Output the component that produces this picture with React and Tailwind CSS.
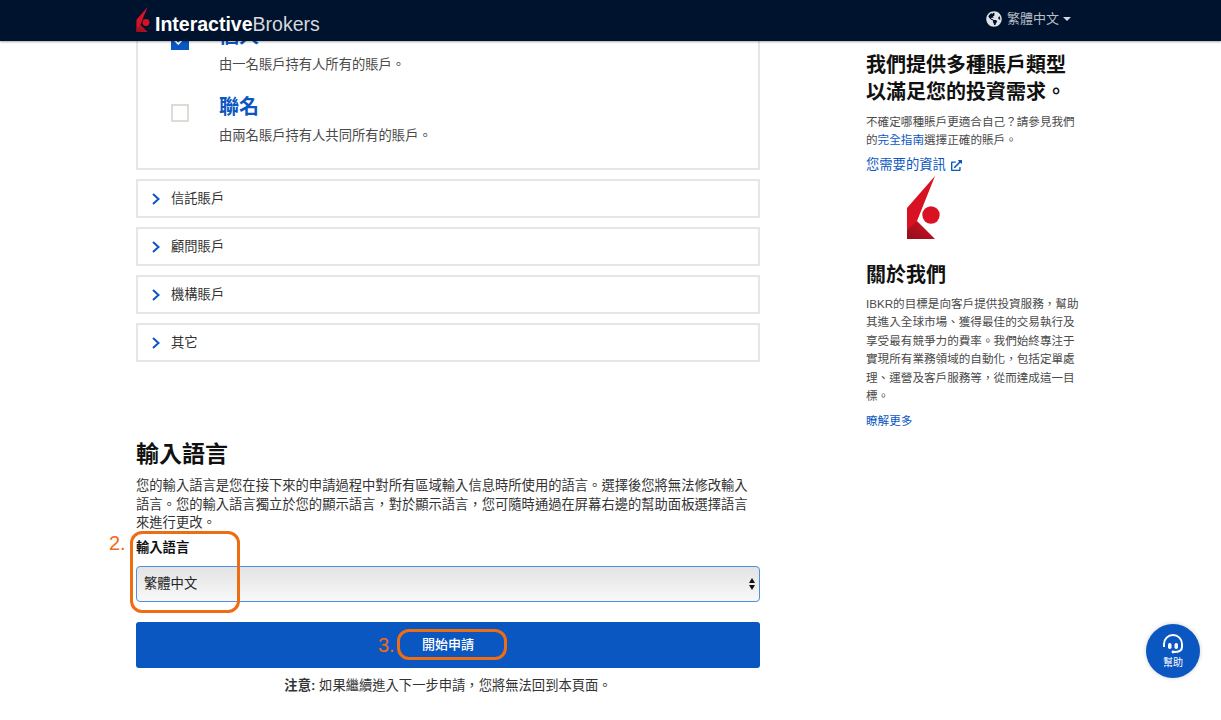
import { Check } from "lucide-react";
import { FaGlobeAmericas, FaExternalLinkAlt } from "react-icons/fa";

const ACCOUNT_GROUPS = ["信託賬戶", "顧問賬戶", "機構賬戶", "其它"];

function IbLogo({ className }) {
  return (
    <svg viewBox="0 0 33 63" className={className}>
      <defs>
        <linearGradient id="ibFold" x1="0" y1="1" x2="1" y2="0">
          <stop offset="0" stopColor="#8f0f1c" />
          <stop offset="1" stopColor="#d81222" />
        </linearGradient>
      </defs>
      <polygon points="28,0 0,32 0,63 10,45" fill="#d81222" />
      <polygon points="0,63 28,63 10,45 0,54" fill="url(#ibFold)" />
      <circle cx="24" cy="39" r="8.7" fill="#d81222" />
    </svg>
  );
}

function Header() {
  return (
    <header className="absolute top-0 left-0 z-20 flex h-[41px] w-full items-center justify-between bg-[#00132e] pl-[136px] pr-[150px] shadow-[0_1px_2px_rgba(0,0,0,0.35)]">
      <div className="flex items-end">
        <IbLogo className="mb-[3px] h-[25px] w-[14px]" />
        <span className="ml-[5px] text-[19.5px] leading-[22px] text-white">
          <span className="font-bold">Interactive</span>
          <span className="text-[#d5d8dd]">Brokers</span>
        </span>
      </div>
      <div className="mb-[4px] flex items-center text-[13px] text-[#b8bdc6]">
        <FaGlobeAmericas className="mr-[5px] text-[16px] text-[#dfe2e6]" />
        繁體中文
        <span className="ml-[4px] h-0 w-0 border-x-[4px] border-t-[4px] border-x-transparent border-t-[#d5d8dd]" />
      </div>
    </header>
  );
}

function AccountRow({ title, desc, checked }) {
  return (
    <div className="flex">
      <div
        className={
          checked
            ? "mt-[10px] flex h-[18px] w-[18px] items-center justify-center bg-[#0b57c2] text-white"
            : "mt-[11px] h-[18px] w-[18px] border-2 border-[#dfdcd8] bg-white"
        }
      >
        {checked && <Check className="h-[14px] w-[14px]" strokeWidth={3} />}
      </div>
      <div className="ml-[30px]">
        <div className="text-[20px] font-semibold leading-[28px] text-[#0b57c2]">{title}</div>
        <div className="mt-[6px] text-[13.3px] leading-[18px] text-[#4a4a4a]">{desc}</div>
      </div>
    </div>
  );
}

function LeftColumn() {
  return (
    <div className="w-[624px] shrink-0">
      {/* top of this card sits under the header, page is scrolled */}
      <div className="border-2 border-t-0 border-[#e6e6e6] pb-[23px] pl-[33px] pt-[22px]">
        <div className="flex flex-col gap-[19px]">
          <AccountRow title="個人" desc="由一名賬戶持有人所有的賬戶。" checked />
          <AccountRow title="聯名" desc="由兩名賬戶持有人共同所有的賬戶。" />
        </div>
      </div>

      <div className="mt-[9px] flex flex-col gap-[9px]">
        {ACCOUNT_GROUPS.map((label) => (
          <div
            key={label}
            className="flex h-[39px] items-center border-2 border-[#e6e6e6] pl-[14px] text-[13.3px] text-[#333333]"
          >
            <svg viewBox="0 0 8 12" className="h-[12px] w-[8px] text-[#0b57c2]" fill="none" stroke="currentColor" strokeWidth="2">
              <path d="M1 1l5.5 5L1 11" />
            </svg>
            <span className="ml-[11px]">{label}</span>
          </div>
        ))}
      </div>

      <h2 className="mt-[76px] text-[23px] font-semibold leading-[32px] text-[#111111]">輸入語言</h2>
      <p className="mt-[7px] text-[13.3px] leading-[18.5px] text-[#333333]">
        您的輸入語言是您在接下來的申請過程中對所有區域輸入信息時所使用的語言。選擇後您將無法修改輸入
        <br />
        語言。您的輸入語言獨立於您的顯示語言，對於顯示語言，您可隨時通過在屏幕右邊的幫助面板選擇語言
        <br />
        來進行更改。
      </p>
      <div className="mt-[5px] text-[13.3px] font-bold leading-[20px] text-[#111111]">輸入語言</div>
      <div className="mt-[8px] flex h-[36px] items-center justify-between rounded-[4px] border border-[#4f8ee0] bg-gradient-to-b from-[#e3e3e3] to-[#f8f8f8] pl-[7px] pr-[4px] text-[13.3px] text-[#222222]">
        繁體中文
        <span className="flex flex-col gap-[2px]">
          <span className="h-0 w-0 border-x-[3.5px] border-b-[5px] border-x-transparent border-b-[#111111]" />
          <span className="h-0 w-0 border-x-[3.5px] border-t-[5px] border-x-transparent border-t-[#111111]" />
        </span>
      </div>
      <button className="mt-[20px] h-[46px] w-full rounded-[3px] bg-[#0b57c2] text-[13px] font-medium text-white">
        開始申請
      </button>
      <p className="mt-[9px] text-center text-[13.3px] leading-[18px] text-[#333333]">
        <b>注意:</b> 如果繼續進入下一步申請，您將無法回到本頁面。
      </p>
    </div>
  );
}

function RightColumn() {
  return (
    <aside className="ml-[106px] w-[214px] shrink-0 pt-[52px]">
      <h2 className="text-[20px] font-semibold leading-[27px] text-[#111111]">
        我們提供多種賬戶類型
        <br />
        以滿足您的投資需求。
      </h2>
      <p className="mt-[7px] text-[11.6px] leading-[18px] text-[#4a4a4a]">
        不確定哪種賬戶更適合自己？請參見我們
        <br />的<span className="text-[#0b57c2]">完全指南</span>選擇正確的賬戶。
      </p>
      <div className="mt-[7px] flex items-center text-[13.3px] leading-[18px] text-[#0b57c2]">
        您需要的資訊
        <FaExternalLinkAlt className="ml-[5px] text-[11px]" />
      </div>
      <IbLogo className="ml-[41px] mt-[2px] h-[63px] w-[33px]" />
      <h2 className="mt-[23px] text-[20px] font-semibold leading-[27px] text-[#111111]">關於我們</h2>
      <p className="mt-[6px] text-[11.6px] leading-[18.4px] text-[#4a4a4a]">
        IBKR的目標是向客戶提供投資服務，幫助
        <br />
        其進入全球市場、獲得最佳的交易執行及
        <br />
        享受最有競爭力的費率。我們始終專注于
        <br />
        實現所有業務領域的自動化，包括定單處
        <br />
        理、運營及客戶服務等，從而達成這一目
        <br />標。
      </p>
      <div className="mt-[7px] text-[11.6px] leading-[18px] text-[#0b57c2]">瞭解更多</div>
    </aside>
  );
}

function Annotations() {
  return (
    <>
      <span className="absolute left-[109px] top-[532px] text-[20px] leading-[22px] text-[#f26a12]">2.</span>
      <div className="absolute left-[130px] top-[531px] h-[82px] w-[110px] rounded-[12px] border-[3px] border-[#ee6c12]" />
      <span className="absolute left-[378px] top-[634px] text-[20px] leading-[22px] text-[#f26a12]">3.</span>
      <div className="absolute left-[397px] top-[629px] h-[31px] w-[110px] rounded-[12px] border-[3px] border-[#ee6c12]" />
    </>
  );
}

function HelpButton() {
  return (
    <div className="absolute left-[1146px] top-[624px] flex h-[54px] w-[54px] flex-col items-center justify-center rounded-full bg-[#0b57c2] text-white shadow-[0_0_4px_rgba(0,0,0,0.2)]">
      <svg viewBox="0 0 24 24" className="h-[24px] w-[24px]" fill="none" stroke="currentColor" strokeWidth="2">
        <path d="M3 14V11a9 9 0 0 1 18 0v3" />
        <path d="M21 14c0 3-2.5 5-8 5" />
        <rect x="7" y="10" width="3.5" height="6" rx="1.7" fill="currentColor" stroke="none" />
        <rect x="13.5" y="10" width="3.5" height="6" rx="1.7" fill="currentColor" stroke="none" />
        <circle cx="12" cy="19" r="1.4" fill="currentColor" stroke="none" />
      </svg>
      <span className="text-[10px] leading-[12px]">幫助</span>
    </div>
  );
}

export default function App() {
  return (
    <div className="relative h-[720px] overflow-hidden bg-white font-['Liberation_Sans','Noto_Sans_CJK_TC',sans-serif]">
      <Header />
      <main className="flex pl-[136px]">
        <LeftColumn />
        <RightColumn />
      </main>
      <Annotations />
      <HelpButton />
    </div>
  );
}
